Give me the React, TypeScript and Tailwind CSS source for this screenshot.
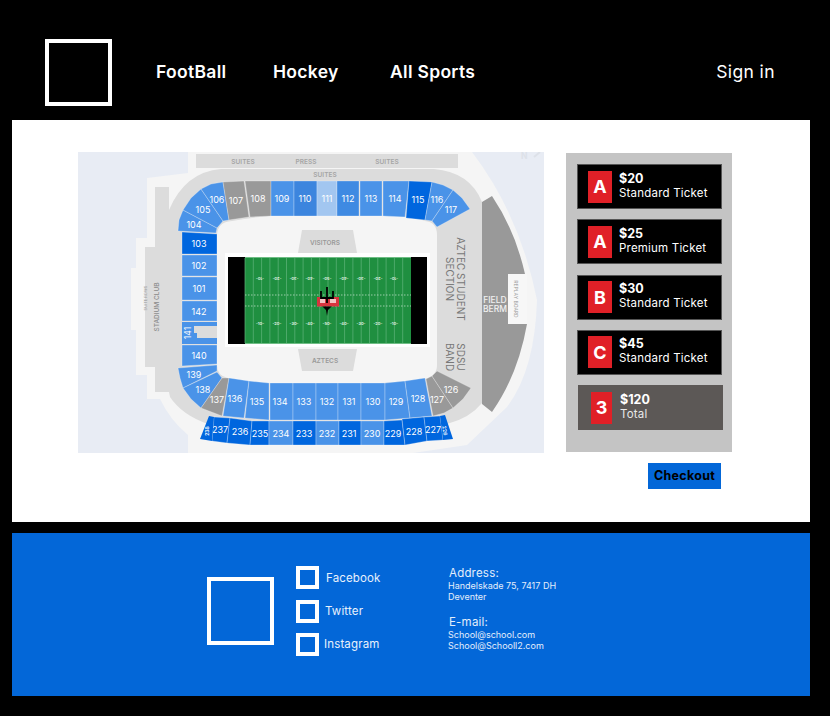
const BLUE = "#4a93e8";
const DARK = "#0066de";
const GRAY = "#999999";

const sections = [
  { n: "104", p: "178,231 179,220 183,210 217,228 216,233", x: 194, y: 225, c: BLUE },
  { n: "105", p: "183,210 191,198 201,189 223,221 217,228", x: 203, y: 210, c: BLUE },
  { n: "106", p: "201,189 211,184 223,182 229,220 223,221", x: 217, y: 200, c: BLUE },
  { n: "107", p: "223,182 244,181 249,217 229,220", x: 236, y: 201, c: GRAY },
  { n: "108", p: "245,181 271,181 271,216 250,217", x: 258, y: 199, c: GRAY },
  { n: "109", p: "271,181 294,181 294,216 271,216", x: 282, y: 199, c: BLUE },
  { n: "110", p: "294,181 317,181 317,216 294,216", x: 305, y: 199, c: "#3c85de" },
  { n: "111", p: "317,181 337,181 337,216 317,216", x: 327, y: 199, c: "#a2c6f0" },
  { n: "112", p: "337,181 359,181 359,216 337,216", x: 348, y: 199, c: "#3f8ae2" },
  { n: "113", p: "360,181 382,181 382,216 360,216", x: 371, y: 199, c: BLUE },
  { n: "114", p: "383,181 409,181 405,217 383,216", x: 395, y: 199, c: BLUE },
  { n: "115", p: "409,181 432,182 425,220 406,218", x: 418, y: 200, c: DARK },
  { n: "116", p: "432,182 443,185 453,190 432,221 425,220", x: 437, y: 200, c: BLUE },
  { n: "117", p: "453,190 462,198 470,209 437,227 432,221", x: 451, y: 210, c: BLUE },
  { n: "103", p: "182,232 217,234 217,254 182,254", x: 199, y: 244, c: DARK },
  { n: "102", p: "182,255 217,255 217,276 182,276", x: 199, y: 266, c: BLUE },
  { n: "101", p: "182,277 217,277 217,300 182,300", x: 199, y: 289, c: BLUE },
  { n: "142", p: "182,301 217,301 217,321 182,321", x: 199, y: 312, c: BLUE },
  { n: "140", p: "182,345 217,345 217,364 182,366", x: 199, y: 356, c: BLUE },
  { n: "139", p: "178,368 217,365 217,371 183,388 180,378", x: 194, y: 375, c: BLUE },
  { n: "138", p: "183,388 217,372 222,378 201,408 191,399", x: 203, y: 390, c: BLUE },
  { n: "137", p: "201,408 222,378 229,378 222,416", x: 217, y: 400, c: GRAY },
  { n: "136", p: "229,378 249,381 244,418 223,416", x: 235, y: 399, c: BLUE },
  { n: "135", p: "249,381 269,383 269,420 245,418", x: 257, y: 402, c: BLUE },
  { n: "134", p: "270,383 293,383 293,420 270,420", x: 280, y: 402, c: BLUE },
  { n: "133", p: "293,383 316,383 316,420 293,420", x: 304, y: 402, c: BLUE },
  { n: "132", p: "316,383 338,383 338,420 316,420", x: 327, y: 402, c: BLUE },
  { n: "131", p: "338,383 361,383 361,420 338,420", x: 349, y: 402, c: BLUE },
  { n: "130", p: "361,383 385,383 385,420 361,420", x: 373, y: 402, c: BLUE },
  { n: "129", p: "385,383 405,381 410,418 385,420", x: 396, y: 402, c: BLUE },
  { n: "128", p: "405,381 425,378 432,416 410,418", x: 418, y: 399, c: BLUE },
  { n: "127", p: "426,379 432,376 453,408 444,413 433,416", x: 437, y: 400, c: GRAY },
  { n: "126", p: "432,376 437,371 471,388 463,399 453,408", x: 451, y: 390, c: GRAY },
  { n: "237", p: "214,417 230,418 227,443 212,441", x: 220, y: 430, c: DARK },
  { n: "236", p: "230,418 252,421 250,445 227,443", x: 240, y: 432, c: DARK },
  { n: "235", p: "252,421 269,421 269,445 250,445", x: 260, y: 434, c: DARK },
  { n: "234", p: "269,421 293,421 293,445 269,445", x: 281, y: 434, c: BLUE },
  { n: "233", p: "293,421 316,421 316,445 293,445", x: 304, y: 434, c: DARK },
  { n: "232", p: "316,421 339,421 339,445 316,445", x: 327, y: 434, c: BLUE },
  { n: "231", p: "339,421 361,421 361,445 339,445", x: 349, y: 434, c: DARK },
  { n: "230", p: "361,421 384,421 384,445 361,445", x: 372, y: 434, c: BLUE },
  { n: "229", p: "384,421 402,420 405,445 384,445", x: 393, y: 434, c: DARK },
  { n: "228", p: "402,419 424,417 427,441 405,445", x: 414, y: 432, c: DARK },
  { n: "227", p: "424,417 440,416 443,440 427,441", x: 433, y: 430, c: DARK },
];

const yardX = [260, 277, 294, 310, 327, 344, 361, 378, 394];
const yardNums = ["10", "20", "30", "40", "50", "40", "30", "20", "10"];

function StadiumMap() {
  const lines = [];
  for (let x = 245; x <= 411; x += 8.3) lines.push(x);

  return (
    <svg viewBox="78 152 466 301" className="w-[466px] h-[301px] shrink-0 block" fontFamily="Inter, sans-serif">
      <rect x="78" y="152" width="466" height="301" fill="#e8ecf4" />
      <path
        d="M188 152 L472 152 Q520 215 537 300 Q535 370 507 407 L467 445 L413 453 L188 453 L188 435 Q170 420 160 399 L147 399 L147 375 L136 375 L136 330 L131 330 L131 268 L136 268 L136 238 L147 238 L147 178 L188 173 Z"
        fill="#f5f5f5"
      />
      <path
        d="M169 210 Q185 172 221 169 L434 169 Q470 172 482 202 L482 403 Q470 418 447 424 L208 424 Q182 415 170 397 L169 392 L155 392 L155 367 L145 367 L145 247 L155 247 L155 187 L169 187 Z"
        fill="#dcdcdc"
      />
      <rect x="196" y="154" width="262" height="14" fill="#dcdcdc" />
      <path d="M217 236 Q217 222 232 221 Q270 214 300 216 L380 216 Q410 216 425 221 Q437 222 437 235 L437 365 Q437 376 425 379 Q400 382 380 383 L270 383 Q245 383 228 378 Q217 376 217 365 Z" fill="#f5f5f5" />
      <path d="M492 196 Q515 230 525 274 L508 274 L508 324 L527 324 Q518 375 492 412 L482 404 L482 202 Z" fill={GRAY} />
      <rect x="508" y="274" width="19" height="50" fill="#f7f7f7" />
      <text transform="translate(514 299) rotate(90)" textAnchor="middle" fontSize="5" fill="#999">REPLAY BOARD</text>

      <path d="M302 230 L353 230 L357 253 L298 253 Z" fill="#dcdcdc" />
      <path d="M298 349 L357 349 L353 371 L302 371 Z" fill="#dcdcdc" />
      <text x="325" y="245" textAnchor="middle" fontSize="6.5" fontWeight="600" fill="#999">VISITORS</text>
      <text x="325" y="363" textAnchor="middle" fontSize="6.5" fontWeight="600" fill="#999">AZTECS</text>

      <g fontSize="6.5" fontWeight="600" fill="#a5a5a5" textAnchor="middle">
        <text x="243" y="164">SUITES</text>
        <text x="306" y="164">PRESS</text>
        <text x="387" y="164">SUITES</text>
        <text x="325" y="177">SUITES</text>
      </g>

      <g transform="translate(460 279) rotate(90)" textAnchor="middle" fontSize="10" fill="#777">
        <text y="3.5">AZTEC STUDENT</text>
        <text y="14.5">SECTION</text>
      </g>
      <g transform="translate(460 357) rotate(90)" textAnchor="middle" fontSize="10" fill="#777">
        <text y="3.5">SDSU</text>
        <text y="14.5">BAND</text>
      </g>
      <g textAnchor="middle" fontSize="8.5" fontWeight="500" fill="#f0f0f0">
        <text x="495" y="303">FIELD</text>
        <text x="495" y="312">BERM</text>
      </g>
      <text transform="translate(159 307) rotate(-90)" textAnchor="middle" fontSize="6.5" fontWeight="500" fill="#8a8a8a">STADIUM CLUB</text>
      <text transform="translate(147 298) rotate(-90)" textAnchor="middle" fontSize="4" fill="#999">SUITE ROWS</text>

      {sections.map((s) => (
        <g key={s.n}>
          <polygon points={s.p} fill={s.c} stroke="#ffffff" strokeOpacity="0.45" strokeWidth="0.6" />
          <text x={s.x} y={s.y + 3} textAnchor="middle" fontSize="9" fill="#ffffff">
            {s.n}
          </text>
        </g>
      ))}

      <path d="M182 322 L217 322 L217 326 L194 326 L194 333 L197 333 L197 338 L217 338 L217 344 L182 344 Z" fill={BLUE} />
      <text transform="translate(191 333) rotate(-90)" textAnchor="middle" fontSize="8.5" fill="#fff">141</text>
      <polygon points="209,416 214,417 212,441 200,439" fill={DARK} />
      <text transform="translate(209 431) rotate(-90)" textAnchor="middle" fontSize="5" fontWeight="600" fill="#fff">238</text>
      <polygon points="440,416 445,415 453,439 443,440" fill={DARK} />
      <text transform="translate(443 431) rotate(80)" textAnchor="middle" fontSize="5" fontWeight="600" fill="#fff">226</text>

      <rect x="225" y="253" width="205" height="94" fill="#ffffff" />
      <rect x="228" y="257" width="199" height="87" fill="#000000" />
      <rect x="245" y="257" width="166" height="87" fill="#1f8f40" />
      <rect x="245" y="257" width="166" height="1" fill="#6fbd85" />
      <rect x="245" y="343" width="166" height="1" fill="#6fbd85" />
      {lines.map((x) => (
        <line key={x} x1={x} x2={x} y1="258" y2="343" stroke="#62b57c" strokeWidth="0.7" />
      ))}
      <line x1="245" x2="411" y1="295" y2="295" stroke="#cfe8d6" strokeWidth="0.7" strokeDasharray="1.5 1.5" />
      <line x1="245" x2="411" y1="306" y2="306" stroke="#cfe8d6" strokeWidth="0.7" strokeDasharray="1.5 1.5" />
      {yardX.map((x, i) => (
        <g key={x} fontSize="4" fontWeight="600" fill="#e4f3e8" textAnchor="middle">
          <text transform={`translate(${x} 277) rotate(180)`}>{`-${yardNums[i]}-`}</text>
          <text x={x} y="325">{`-${yardNums[i]}-`}</text>
        </g>
      ))}

      <rect x="317" y="297" width="22" height="9.5" fill="#d8343e" />
      <rect x="320" y="299" width="5" height="4" fill="#f2c4c4" />
      <rect x="330" y="299" width="6" height="4" fill="#f2c4c4" />
      <path d="M321 291 V298 H333 V291 M327 287 V303" stroke="#000" strokeWidth="1.8" fill="none" />
      <path d="M322.5 306.5 H331.5 L328 310 L327 316 L326 310 Z" fill="#000" />

      <text x="521" y="158.5" fontSize="8.5" fontWeight="700" fill="#dde1e8">N</text>
      <line x1="534" y1="157" x2="540" y2="152" stroke="#dde1e8" strokeWidth="2" />
    </svg>
  );
}

const tickets = [
  { badge: "A", price: "$20", label: "Standard Ticket" },
  { badge: "A", price: "$25", label: "Premium Ticket" },
  { badge: "B", price: "$30", label: "Standard Ticket" },
  { badge: "C", price: "$45", label: "Standard Ticket" },
];

function TicketRow({ badge, price, label }: { badge: string; price: string; label: string }) {
  return (
    <div className="h-[45px] w-[145px] bg-black border border-[#555] flex items-center pl-[10px] gap-[7px]">
      <div className="w-[24px] h-[32px] bg-[#e02027] flex items-center justify-center text-white font-bold text-[18px]">{badge}</div>
      <div className="text-white leading-[15px] mb-[2px]">
        <div className="font-bold text-[12.5px]">{price}</div>
        <div className="text-[11.5px] tracking-[0.2px] whitespace-nowrap">{label}</div>
      </div>
    </div>
  );
}

const socials = ["Facebook", "Twitter", "Instagram"];

export default function App() {
  return (
    <div className="bg-black w-[830px] h-[716px] overflow-hidden font-['Inter',sans-serif]">
      <header className="h-[120px] flex items-center pl-[45px] pr-[55px] pt-[25px] text-white">
        <div className="w-[67px] h-[67px] border-[4px] border-white mr-[44px]"></div>
        <nav className="flex items-center font-semibold text-[17.5px] tracking-[0.3px]">
          <a className="w-[117px]">FootBall</a>
          <a className="w-[117px]">Hockey</a>
          <a>All Sports</a>
        </nav>
        <a className="ml-auto text-[17.5px] tracking-[0.4px]">Sign in</a>
      </header>

      <main className="ml-[12px] w-[798px] h-[402px] bg-white pt-[32px] pl-[66px] flex items-start gap-[22px]">
        <StadiumMap />
        <div className="pt-[1px] w-[166px] shrink-0">
          <div className="h-[299px] bg-[#c4c4c4] pt-[11px] pl-[11px] flex flex-col gap-[10.3px]">
            {tickets.map((t) => (
              <TicketRow key={t.price} {...t} />
            ))}
            <div className="h-[45px] w-[145px] ml-[1px] bg-[#5c5856] flex items-center pl-[13px] gap-[8px]">
              <div className="w-[21px] h-[32px] bg-[#e02027] flex items-center justify-center text-white font-bold text-[18px]">3</div>
              <div className="text-white leading-[15px] mb-[2px]">
                <div className="font-bold text-[12.5px]">$120</div>
                <div className="text-[11.5px] tracking-[0.2px] text-[#e8e8e8]">Total</div>
              </div>
            </div>
          </div>
          <div className="flex justify-end pr-[11px] mt-[11px]">
            <button className="w-[73px] h-[26px] bg-[#0367d8] text-black font-bold text-[12.5px] tracking-[0.3px]">Checkout</button>
          </div>
        </div>
      </main>

      <footer className="ml-[12px] w-[798px] mt-[11px] h-[163px] bg-[#0367d8] text-white flex items-start pl-[195px]">
        <div className="w-[67px] h-[68px] border-[4px] border-white mt-[44px] mr-[22px]"></div>
        <div className="mt-[33px] flex flex-col gap-[10.5px] w-[152px]">
          {socials.map((s, i) => (
            <div key={s} className="flex items-center h-[23px] text-[11.5px] tracking-[0.15px] text-[#e8f1fc]">
              <div className="w-[23px] h-[23px] border-[4px] border-white mr-[6px]"></div>
              <span className={i === 2 ? "ml-[-1px] pt-[1px]" : i === 0 ? "ml-[1px] pt-[2px]" : "pt-[2px]"}>{s}</span>
            </div>
          ))}
        </div>
        <div className="mt-[33px] text-[#e3eefb]">
          <div className="text-[11.5px] leading-[14px] pl-[1px] tracking-[0.2px]">Address:</div>
          <div className="text-[9px] leading-[11px] whitespace-nowrap">
            Handelskade 75, 7417 DH
            <br />
            Deventer
          </div>
          <div className="text-[11.5px] leading-[14px] pl-[1px] mt-[13px] tracking-[0.2px]">E-mail:</div>
          <div className="text-[9px] leading-[11px] whitespace-nowrap">
            School@school.com
            <br />
            School@Schooll2.com
          </div>
        </div>
      </footer>
    </div>
  );
}
